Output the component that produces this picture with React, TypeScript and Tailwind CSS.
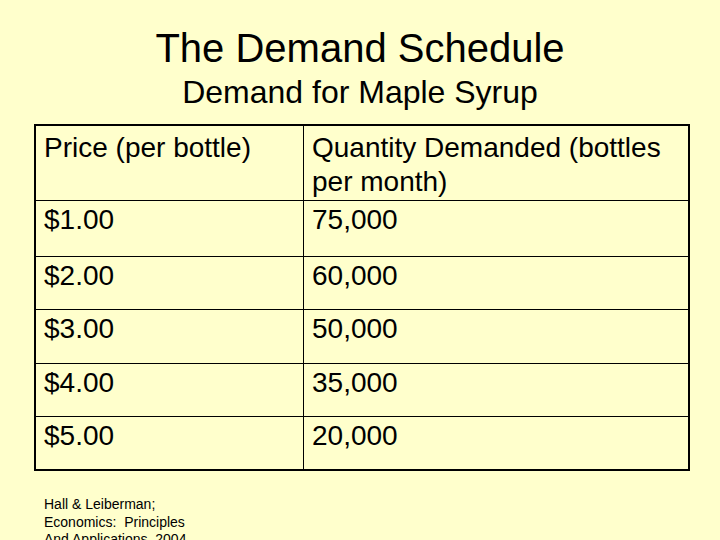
const rows = [
  { price: "$1.00", qty: "75,000", h: "h-[56px]" },
  { price: "$2.00", qty: "60,000", h: "h-[53px]" },
  { price: "$3.00", qty: "50,000", h: "h-[54px]" },
  { price: "$4.00", qty: "35,000", h: "h-[53px]" },
  { price: "$5.00", qty: "20,000", h: "h-[53px]" },
]

export default function App() {
  return (
    <div
      className="w-[720px] h-[540px] overflow-hidden bg-[#ffffcc] text-black"
      style={{ fontFamily: '"Liberation Sans", Arial, sans-serif' }}
    >
      {/* Title */}
      <div className="pt-[25px] flex flex-col items-center">
        <h1 className="text-[40px] leading-[46px]">The Demand Schedule</h1>
        <h2 className="mt-[3px] text-[32px] leading-[37px]">Demand for Maple Syrup</h2>
      </div>

      {/* Table */}
      <div className="mt-[13px] ml-[34px] w-[656px] border-2 border-black text-[28px] leading-[34px]">
        <div className="flex h-[74px]">
          <div className="w-[268px] pl-[8px] pt-[5px] border-r border-black">Price (per bottle)</div>
          <div className="flex-1 pl-[8px] pt-[5px]">Quantity Demanded (bottles per month)</div>
        </div>
        {rows.map((r) => (
          <div key={r.price} className={`flex border-t border-black ${r.h}`}>
            <div className="w-[268px] pl-[8px] pt-[2px] border-r border-black">{r.price}</div>
            <div className="flex-1 pl-[8px] pt-[2px]">{r.qty}</div>
          </div>
        ))}
      </div>

      {/* Source */}
      <div className="mt-[25px] ml-[44px] text-[14px] leading-[17.5px]">
        <div>Hall &amp; Leiberman;</div>
        <div>Economics:&nbsp; Principles</div>
        <div>And Applications, 2004</div>
      </div>
    </div>
  )
}
